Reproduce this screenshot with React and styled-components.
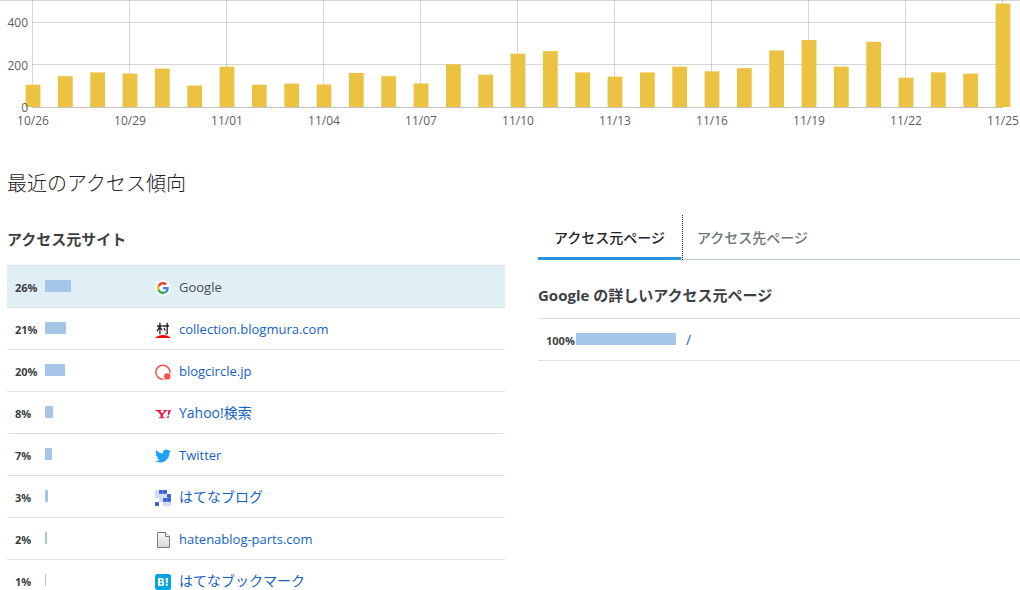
import React from "react";
import styled, { createGlobalStyle } from "styled-components";

const latin = '"Open Sans", "Noto Sans CJK JP", sans-serif';

const GlobalStyle = createGlobalStyle`
  *, *::before, *::after { box-sizing: border-box; }
  body {
    margin: 0;
    background: #fff;
    color: #3d3f44;
    font-family: ${latin};
    font-size: 14px;
    line-height: 20px;
  }
`;

const Page = styled.main`
  padding-bottom: 24px;
`;

const Chart = styled.svg`
  display: block;
  width: 100%;
  height: auto;
`;

const AxisLabel = styled.text`
  font-family: "Open Sans", sans-serif;
  font-size: 12px;
  fill: #606060;
`;

const Section = styled.section`
  padding: 34px 0 0 7px;
`;

const Title = styled.h1`
  margin: 0;
  color: #222;
  font-size: 20px;
  font-weight: 300;
  line-height: 32px;
`;

const Columns = styled.div`
  display: grid;
  grid-template-columns: minmax(0, 498fr) minmax(0, 482fr);
  column-gap: 33px;
  align-items: start;
  padding-top: 15px;
`;

const Panel = styled.div`
  padding-top: ${(p) => (p.$inset ? "13px" : "0")};
`;

const Subtitle = styled.h2`
  margin: 0;
  padding: ${(p) => (p.$tight ? "24px 0 12px" : "0 0 15px")};
  font-size: 15px;
  font-weight: 700;
  line-height: 22px;
`;

const Table = styled.table`
  width: 100%;
  border-collapse: collapse;
  table-layout: fixed;
`;

const Row = styled.tr`
  height: 42px;
  background: ${(p) => (p.$selected ? "#e0eef5" : "transparent")};
  border-top: 1px solid #dde3e4;
  border-bottom: 1px solid #dde3e4;
`;

const ShareCell = styled.th`
  width: 38px;
  padding: 3px 0 0 8px;
  text-align: left;
  font-size: 11px;
  font-weight: 700;
  line-height: 16px;
`;

const BarCell = styled.td`
  width: 110px;
  padding: 0 0 2px;
`;

const Bar = styled.div`
  height: 12px;
  background: #a5c6e8;
`;

const SiteCell = styled.td`
  padding: 3px 0 0;
`;

const Site = styled.div`
  display: flex;
  align-items: center;
  gap: 8px;
`;

const Link = styled.a`
  padding-bottom: 2px;
  color: ${(p) => (p.$selected ? "#4a4c50" : "#1462c6")};
  font-size: ${(p) => (p.$latin ? "13px" : "14px")};
  text-decoration: none;
`;

const Icon = styled.svg`
  display: block;
  flex: none;
  width: 16px;
  height: 16px;
`;

const Tabs = styled.div`
  display: flex;
  height: 45px;
  border-bottom: 1px solid #b9cccf;
`;

const Tab = styled.button`
  position: relative;
  height: 45px;
  padding: 3px 16px 0;
  border: 0;
  border-bottom: 3px solid ${(p) => (p.$active ? "#2d93dd" : "transparent")};
  background: none;
  color: ${(p) => (p.$active ? "#222" : "#6d7378")};
  font-family: inherit;
  font-size: 14px;
  font-weight: 500;
  line-height: 20px;

  &::after {
    content: "";
    display: ${(p) => (p.$active ? "block" : "none")};
    position: absolute;
    top: 0;
    right: -2px;
    bottom: -3px;
    width: 1px;
    background: repeating-linear-gradient(#222 0 1px, transparent 1px 2px);
  }
`;

const visits = [
  105, 145, 163, 157, 181, 101, 190, 105, 110, 106, 160, 145, 111, 201, 152,
  251, 263, 163, 143, 163, 190, 168, 183, 266, 315, 190, 307, 138, 163, 157, 487,
];
const dates = [
  "10/26", "10/29", "11/01", "11/04", "11/07", "11/10",
  "11/13", "11/16", "11/19", "11/22", "11/25",
];

const LEFT = 33;
const RIGHT = 1003;
const BASE = 107;
const STEP = (RIGHT - LEFT) / (visits.length - 1);
const barHeight = (n) => (n * 85) / 400;

function AccessChart() {
  return (
    <Chart viewBox="0 0 1020 134" role="img" aria-label="アクセス数">
      <g fill="#000" fillOpacity="0.16">
        <rect x="0" y="0" width="1020" height="1" />
        <rect x="32" y="22" width="971" height="1" />
        <rect x="32" y="64" width="971" height="1" />
        {dates.map((d, i) => (
          <rect key={d} x={Math.round(LEFT + i * 3 * STEP) - 1} y="0" width="1" height="107" />
        ))}
      </g>
      <rect x="32" y="107" width="971" height="1" fill="#c4c4c4" />
      <g fill="#ecc242">
        {visits.map((n, i) => (
          <rect
            key={i}
            x={LEFT + i * STEP - 7.4}
            y={BASE - barHeight(n)}
            width="14.8"
            height={barHeight(n)}
          />
        ))}
      </g>
      <g textAnchor="end">
        <AxisLabel x="28" y="27">400</AxisLabel>
        <AxisLabel x="28" y="70">200</AxisLabel>
        <AxisLabel x="28" y="112">0</AxisLabel>
      </g>
      <g textAnchor="middle">
        {dates.map((d, i) => (
          <AxisLabel key={d} x={Math.round(LEFT + i * 3 * STEP)} y="125">{d}</AxisLabel>
        ))}
      </g>
    </Chart>
  );
}

const GoogleIcon = () => (
  <Icon viewBox="0 0 16 16" aria-hidden="true">
    <circle cx="8" cy="8" r="8" fill="#fff" />
    <g transform="translate(2 2) scale(0.25)">
      <path fill="#EA4335" d="M24 9.5c3.54 0 6.71 1.22 9.21 3.6l6.85-6.85C35.9 2.38 30.47 0 24 0 14.62 0 6.51 5.38 2.56 13.22l7.98 6.19C12.43 13.72 17.74 9.5 24 9.5z" />
      <path fill="#4285F4" d="M46.98 24.55c0-1.57-.15-3.09-.38-4.55H24v9.02h12.94c-.58 2.96-2.26 5.48-4.78 7.18l7.73 6c4.51-4.18 7.09-10.36 7.09-17.65z" />
      <path fill="#FBBC05" d="M10.53 28.59c-.48-1.45-.76-2.99-.76-4.59s.27-3.14.76-4.59l-7.98-6.19C.92 16.46 0 20.12 0 24c0 3.88.92 7.54 2.56 10.78l7.97-6.19z" />
      <path fill="#34A853" d="M24 48c6.48 0 11.93-2.13 15.89-5.81l-7.73-6c-2.15 1.45-4.92 2.3-8.16 2.3-6.26 0-11.57-4.22-13.47-9.91l-7.98 6.19C6.51 42.62 14.62 48 24 48z" />
    </g>
  </Icon>
);

const MuraIcon = () => (
  <Icon viewBox="0 0 16 16" aria-hidden="true">
    <path d="M2 4h5.6M4.9.8v11.4M4.7 4.6L2 9.4M5.2 5.6l2 2.6M8 4h6M12.2.8v10.4q0 .9-1.8.7M9 6.2l1.4 2.4" fill="none" stroke="#222" strokeWidth="1.3" />
    <path d="M0 16Q3 13 8 13t8 3z" fill="#f00a0a" />
  </Icon>
);

const CircleIcon = () => (
  <Icon viewBox="0 0 16 16" aria-hidden="true">
    <path d="M14.8 9.2A7 7 0 1 0 8.4 15.2" fill="none" stroke="#fa5248" strokeWidth="1.5" />
    <circle cx="12.3" cy="12.4" r="3.2" fill="#fa5248" />
  </Icon>
);

const YahooIcon = () => (
  <Icon viewBox="0 0 16 16" aria-hidden="true">
    <path d="M.6 4h5.7v1H5.2l2 2.6L9.5 5H8.4V4h4v1h-1.1L8 8.7v2.5h1.4v1H4v-1h1.6V8.8L2.2 5H.6z" fill="#f5103c" />
    <path d="M13.3 4H16l-2 5.2h-1.2zM12.4 10.3h1.7l-.5 1.8h-1.7z" fill="#f5103c" />
  </Icon>
);

const TwitterIcon = () => (
  <Icon viewBox="0 0 24 24" aria-hidden="true">
    <path fill="#1da1f2" d="M23.95 4.57a10 10 0 0 1-2.82.77 4.96 4.96 0 0 0 2.16-2.72c-.95.55-2 .95-3.13 1.18a4.92 4.92 0 0 0-8.38 4.48C7.69 8.1 4.07 6.13 1.64 3.16a4.82 4.82 0 0 0-.66 2.48c0 1.71.87 3.21 2.19 4.1a4.9 4.9 0 0 1-2.23-.62v.06a4.92 4.92 0 0 0 3.95 4.83 5 5 0 0 1-2.21.08 4.94 4.94 0 0 0 4.6 3.42A9.87 9.87 0 0 1 0 19.54a13.99 13.99 0 0 0 7.55 2.21c9.05 0 14-7.5 14-13.98 0-.21 0-.42-.02-.63a9.94 9.94 0 0 0 2.42-2.57z" />
  </Icon>
);

const blogTiles = ["lbb.", "lllb", ".lbb", "b.ll"];
const HatenaBlogIcon = () => (
  <Icon viewBox="0 0 16 16" aria-hidden="true">
    {blogTiles.flatMap((line, y) =>
      [...line].map((c, x) =>
        c === "." ? null : (
          <rect key={x + "-" + y} x={x * 4} y={y * 4} width="4" height="4" fill={c === "b" ? "#2f5bd4" : "#cdd8f2"} stroke="#fff" strokeOpacity="0.35" strokeWidth="0.5" />
        )
      )
    )}
  </Icon>
);

const FileIcon = () => (
  <Icon viewBox="0 0 16 16" aria-hidden="true">
    <defs>
      <linearGradient id="sheet" x1="0" y1="0" x2="0" y2="1">
        <stop offset="0" stopColor="#fafafa" />
        <stop offset="1" stopColor="#d6d6d6" />
      </linearGradient>
    </defs>
    <path d="M2.5.5h8l4 4v11h-12z" fill="url(#sheet)" stroke="#7b7b7b" />
    <path d="M10.5.5v4h4" fill="#fff" stroke="#7b7b7b" />
  </Icon>
);

const BookmarkIcon = () => (
  <Icon viewBox="0 0 16 16" aria-hidden="true">
    <rect width="16" height="16" rx="2.5" fill="#00a4de" />
    <path fillRule="evenodd" fill="#fff" d="M3 4h3.6q2.4 0 2.4 2 0 1.4-1.3 1.8 1.7.3 1.7 2 0 2.2-2.6 2.2H3zm2 1.6v1.6h1.2q.9 0 .9-.8t-.9-.8zm0 3v1.8h1.3q1 0 1-.9t-1-.9z" />
    <path d="M10.8 4h2v5.2h-2z" fill="#fff" />
    <circle cx="11.8" cy="11" r="1.1" fill="#fff" />
  </Icon>
);

const sites = [
  { share: 26, name: "Google", icon: GoogleIcon, selected: true, latin: true },
  { share: 21, name: "collection.blogmura.com", icon: MuraIcon, latin: true },
  { share: 20, name: "blogcircle.jp", icon: CircleIcon, latin: true },
  { share: 8, name: "Yahoo!検索", icon: YahooIcon },
  { share: 7, name: "Twitter", icon: TwitterIcon, latin: true },
  { share: 3, name: "はてなブログ", icon: HatenaBlogIcon },
  { share: 2, name: "hatenablog-parts.com", icon: FileIcon, latin: true },
  { share: 1, name: "はてなブックマーク", icon: BookmarkIcon },
];

function ShareRow({ share, name, icon: SiteIcon, selected, latin: isLatin }) {
  return (
    <Row $selected={selected}>
      <ShareCell scope="row">{share}%</ShareCell>
      <BarCell>
        <Bar style={{ width: share }} />
      </BarCell>
      <SiteCell>
        <Site>
          {SiteIcon && <SiteIcon />}
          <Link href="#" $selected={selected} $latin={isLatin}>{name}</Link>
        </Site>
      </SiteCell>
    </Row>
  );
}

export default function App() {
  return (
    <Page lang="ja">
      <GlobalStyle />
      <AccessChart />
      <Section>
        <Title>最近のアクセス傾向</Title>
        <Columns>
          <Panel $inset>
            <Subtitle id="sites">アクセス元サイト</Subtitle>
            <Table aria-labelledby="sites">
              <tbody>
                {sites.map((s) => <ShareRow key={s.name} {...s} />)}
              </tbody>
            </Table>
          </Panel>
          <Panel>
            <Tabs role="tablist">
              <Tab type="button" role="tab" aria-selected="true" $active>アクセス元ページ</Tab>
              <Tab type="button" role="tab" aria-selected="false">アクセス先ページ</Tab>
            </Tabs>
            <Subtitle id="pages" $tight>Google の詳しいアクセス元ページ</Subtitle>
            <Table aria-labelledby="pages">
              <tbody>
                <ShareRow share={100} name="/" />
              </tbody>
            </Table>
          </Panel>
        </Columns>
      </Section>
    </Page>
  );
}
